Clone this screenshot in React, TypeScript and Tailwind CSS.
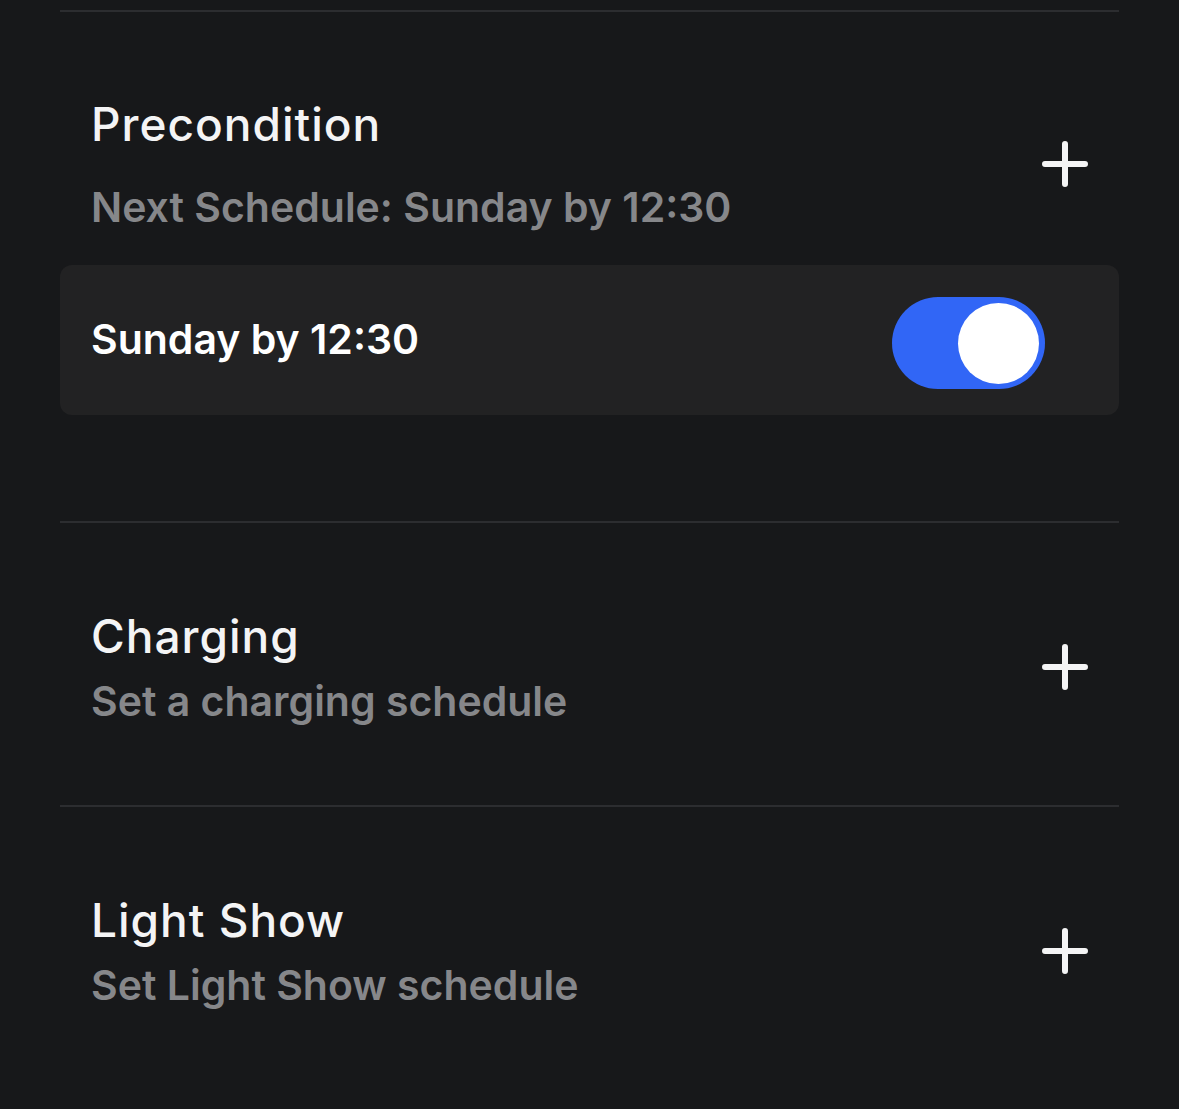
import { useState } from "react"

/* ─── PLUS ICON ─── */
const PlusIcon = () => (
    <svg width="46" height="46" viewBox="0 0 46 46" fill="none" className="shrink-0">
        <path d="M23 3v40M3 23h40" stroke="#f4f4f5" strokeWidth="6" strokeLinecap="round" />
    </svg>
)

const Divider = () => <div className="h-[2px] bg-[#2c2d30]" />

type RowProps = { title: string; subtitle: string; gap: string }

const ScheduleRow = ({ title, subtitle, gap }: RowProps) => (
    <div className="flex items-center justify-between pl-[31px] pr-[31px]">
        <div className="flex flex-col">
            <span className="text-[46px] leading-[56px] font-medium tracking-[1px] text-[#f4f4f5]">{title}</span>
            <span className={`${gap} text-[41px] leading-[50px] font-semibold text-[#86878a]`}>{subtitle}</span>
        </div>
        <PlusIcon />
    </div>
)

export default function App() {
    const [on, setOn] = useState(true)

    return (
        <div
            className="min-h-[1109px] bg-[#17181a] px-[60px] pt-[10px] overflow-hidden"
            style={{ fontFamily: "Inter, 'Noto Sans', sans-serif" }}
        >
            <Divider />

            {/* ── Precondition ── */}
            <div className="pt-[84px] pb-[106px]">
                <ScheduleRow title="Precondition" subtitle="Next Schedule: Sunday by 12:30" gap="mt-[30px]" />

                <div className="mt-[33px] h-[150px] rounded-[12px] bg-[#222223] flex items-center justify-between pl-[31px] pr-[74px]">
                    <span className="text-[41px] font-semibold text-white">Sunday by 12:30</span>
                    <button
                        onClick={() => setOn(!on)}
                        className={`mt-[6px] w-[153px] h-[92px] rounded-full p-[6px] flex items-center ${on ? "bg-[#3166f6] justify-end" : "bg-[#3a3b3e] justify-start"}`}
                    >
                        <span className="w-[81px] h-[81px] rounded-full bg-white block" />
                    </button>
                </div>
            </div>

            <Divider />

            {/* ── Charging ── */}
            <div className="pt-[85px] pb-[79px]">
                <ScheduleRow title="Charging" subtitle="Set a charging schedule" gap="mt-[12px]" />
            </div>

            <Divider />

            {/* ── Light Show ── */}
            <div className="pt-[85px] pb-[80px]">
                <ScheduleRow title="Light Show" subtitle="Set Light Show schedule" gap="mt-[12px]" />
            </div>
        </div>
    )
}
